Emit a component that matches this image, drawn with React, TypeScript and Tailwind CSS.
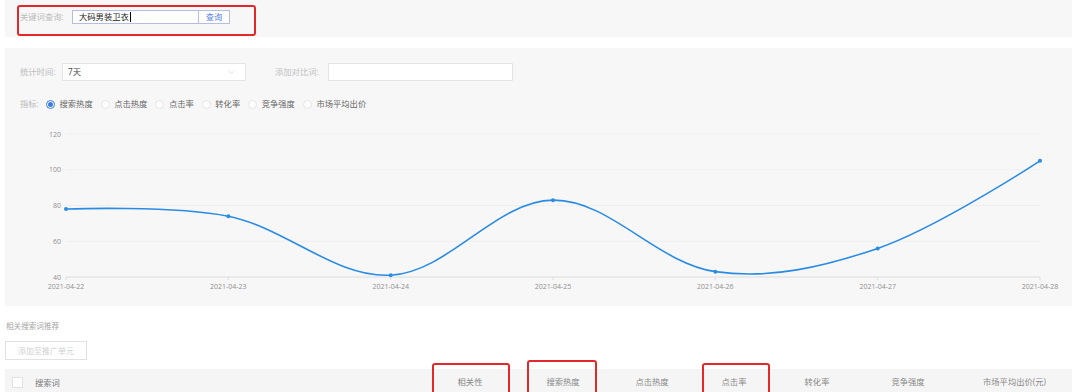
import React from 'react';
import { ChevronDown } from 'lucide-react';

const DATES = ['2021-04-22', '2021-04-23', '2021-04-24', '2021-04-25', '2021-04-26', '2021-04-27', '2021-04-28'];
const VALUES = [78, 74, 41, 83, 43, 56, 105];

const X0 = 66;
const X1 = 1040;
const Y_TOP = 134; // 120
const Y_BOT = 277; // 40

const toY = (v: number) => Y_BOT - ((v - 40) / 80) * (Y_BOT - Y_TOP);
const points = VALUES.map((v, i) => ({ x: X0 + (i * (X1 - X0)) / (VALUES.length - 1), y: toY(v) }));

// smooth line like the chart lib does it: control points from neighbours, weighted by distance
function smoothPath(pts: { x: number; y: number }[], s = 0.35) {
  const cps = pts.map((p, i) => {
    if (i === 0 || i === pts.length - 1) return { prev: p, next: p };
    const a = pts[i - 1];
    const b = pts[i + 1];
    const vx = b.x - a.x;
    const vy = b.y - a.y;
    const d0 = Math.hypot(p.x - a.x, p.y - a.y);
    const d1 = Math.hypot(b.x - p.x, b.y - p.y);
    const r0 = d0 / (d0 + d1);
    const r1 = d1 / (d0 + d1);
    return {
      prev: { x: p.x - vx * s * r0, y: p.y - vy * s * r0 },
      next: { x: p.x + vx * s * r1, y: p.y + vy * s * r1 },
    };
  });
  let d = `M${pts[0].x},${pts[0].y}`;
  for (let i = 1; i < pts.length; i++) {
    const c1 = cps[i - 1].next;
    const c2 = cps[i].prev;
    d += ` C${c1.x},${c1.y} ${c2.x},${c2.y} ${pts[i].x},${pts[i].y}`;
  }
  return d;
}

const METRICS = ['搜索热度', '点击热度', '点击率', '转化率', '竞争强度', '市场平均出价'];
const COLUMNS = ['相关性', '搜索热度', '点击热度', '点击率', '转化率', '竞争强度', '市场平均出价(元)'];

const TrendChart = () => {
  const ticks = [120, 100, 80, 60, 40];
  return (
    <svg width={1067} height={186} viewBox="5 120 1067 186" className="block">
      {ticks.map((t) => (
        <g key={t}>
          <line
            x1={X0}
            x2={X1}
            y1={toY(t)}
            y2={toY(t)}
            stroke={t === 40 ? '#dcdcdc' : '#efefef'}
            strokeWidth={1}
          />
          <text x={61} y={toY(t) + 2.5} textAnchor="end" fontSize={7} fill="#909090">
            {t}
          </text>
        </g>
      ))}
      {points.map((p, i) => (
        <g key={DATES[i]}>
          <line x1={p.x} x2={p.x} y1={Y_BOT} y2={Y_BOT + 3} stroke="#dcdcdc" />
          <text x={p.x} y={289} textAnchor="middle" fontSize={7} fill="#909090">
            {DATES[i]}
          </text>
        </g>
      ))}
      <path d={smoothPath(points)} fill="none" stroke="#2a8be3" strokeWidth={1.6} />
      {points.map((p, i) => (
        <circle key={i} cx={p.x} cy={p.y} r={2} fill="#2a8be3" />
      ))}
    </svg>
  );
};

export default function App() {
  return (
    <div className="relative h-[392px] w-[1080px] overflow-hidden bg-white font-['Open_Sans','Noto_Sans_CJK_SC',sans-serif] text-[8.3px] leading-[10px]">
      {/* keyword search */}
      <div className="ml-[5px] flex h-[37px] w-[1067px] items-start bg-[#f7f7f7] pl-[15px] pt-[10px]">
        <span className="mt-[2px] w-[52px] text-[#bbbbbb]">关键词查询:</span>
        <div className="flex h-[14px] w-[127px] items-center border border-[#b5bde0] bg-white pl-[6px] text-[#222]">
          大码男装卫衣
          <span className="ml-px h-[10px] w-px bg-black" />
        </div>
        <div className="flex h-[14px] w-[31px] items-center justify-center border border-l-0 border-[#b5bde0] bg-white text-[#5a7fdc]">
          查询
        </div>
      </div>

      {/* trend panel */}
      <div className="ml-[5px] mt-[11px] h-[258px] w-[1067px] bg-[#f7f7f7] pt-[15px]">
        <div className="flex h-[18px] items-center pl-[15px]">
          <span className="w-[42px] text-[#bbbbbb]">统计时间:</span>
          <div className="flex h-[18px] w-[184px] items-center justify-between border border-[#e4e4e4] bg-white pl-[5px] pr-[9px] text-[#444]">
            7天
            <ChevronDown size={9} strokeWidth={1.5} className="text-[#cccccc]" />
          </div>
          <span className="ml-[29px] w-[53px] text-[#c0c0c0]">添加对比词:</span>
          <div className="h-[18px] w-[185px] border border-[#e4e4e4] bg-white" />
        </div>

        <div className="mt-[17px] flex h-[12px] items-center pl-[15px]">
          <span className="w-[26px] text-[#bbbbbb]">指标:</span>
          <div className="flex items-center gap-[8px]">
            {METRICS.map((m, i) => (
              <label key={m} className="flex items-center gap-[4.5px]">
                {i === 0 ? (
                  <span className="flex h-[9px] w-[9px] items-center justify-center rounded-full border border-[#3b7be0] bg-white">
                    <span className="h-[5px] w-[5px] rounded-full bg-[#3b7be0]" />
                  </span>
                ) : (
                  <span className="h-[9px] w-[9px] rounded-full border border-[#e3e3e3] bg-white" />
                )}
                <span className="text-[#666]">{m}</span>
              </label>
            ))}
          </div>
        </div>

        <div className="mt-[10px]">
          <TrendChart />
        </div>
      </div>

      {/* related keywords */}
      <p className="ml-[6px] mt-[15px] text-[7.6px] text-[#a5a5a5]">相关搜索词推荐</p>
      <button className="ml-[5px] mt-[10px] flex h-[19px] w-[82px] items-center justify-center border border-[#e2e2e2] bg-white text-[8px] text-[#d0d0d0]">
        添加至推广单元
      </button>

      <div className="ml-[5px] mt-[9px] grid h-[30px] w-[1067px] grid-cols-[420px_90px_96px_82px_82px_84px_98px_115px] items-start bg-[#f5f5f5] pt-[8px] text-[#888]">
        <div className="flex items-center">
          <span className="ml-[7px] h-[11px] w-[11px] border border-[#e2e2e2] bg-white" />
          <span className="ml-[12px] text-[#777]">搜索词</span>
        </div>
        {COLUMNS.map((c) => (
          <div key={c} className="text-center">
            {c}
          </div>
        ))}
      </div>

      {/* annotation boxes */}
      <div className="absolute left-[17px] top-[5px] h-[31px] w-[239px] rounded-[3px] border-[2.5px] border-[#e1292b]" />
      <div className="absolute left-[432px] top-[363px] h-[40px] w-[78px] rounded-[3px] border-[2.5px] border-[#e1292b]" />
      <div className="absolute left-[527px] top-[360px] h-[40px] w-[70px] rounded-[3px] border-[2.5px] border-[#e1292b]" />
      <div className="absolute left-[702px] top-[363px] h-[40px] w-[68px] rounded-[3px] border-[2.5px] border-[#e1292b]" />
    </div>
  );
}
